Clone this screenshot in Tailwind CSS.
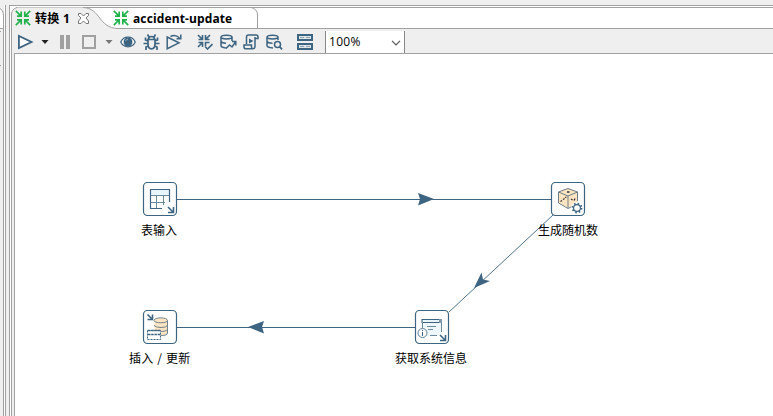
<!DOCTYPE html>
<html lang="zh-CN">
<head>
<meta charset="utf-8">
<title>转换 1</title>
<script src="https://cdn.jsdelivr.net/npm/@tailwindcss/browser@4"></script>
</head>
<body class="w-[773px] h-[416px] overflow-hidden bg-[#efefef] text-black font-['Open_Sans','Noto_Sans_CJK_SC',sans-serif] text-[12px]">
<div class="flex flex-col h-[416px]">
  <div class="h-[5px] shrink-0"></div>
  <div class="flex flex-1 min-h-0">
    <!-- edge of the explorer pane -->
    <aside class="w-[6px] shrink-0 border-r border-[#a0a0a0] flex">
      <svg class="w-[5px] h-[411px]" viewBox="0 5 5 411" fill="none">
        <path d="M4 5h1v411h-1z" fill="#fff"/>
        <path d="M0 9Q3 10 3.5 15V28H0z" fill="#fff"/>
        <path d="M0 8.5Q3.500 10 3.500 15V416M0 28.500H3M0 31.500H1M0 65.500H1" stroke="#a0a0a0"/>
      </svg>
    </aside>
    <div class="w-[3px] shrink-0"></div>
    <main class="flex-1 min-w-0 border-l border-t border-[#a0a0a0] bg-white pl-px pt-px">
      <div class="h-full border-l border-t border-[#a0a0a0] bg-[#efefef] flex flex-col">
        <!-- tabs -->
        <div class="relative h-[21px] shrink-0 bg-white">
          <svg class="absolute left-[-1px] top-[-1px] w-[762px] h-[22px]" viewBox="11 7 762 22" fill="none">
            <path d="M11 29V13Q12 8 17 7.500H83C100 7.500 98 28 118 28.500V29z" fill="#efefef"/>
            <path d="M10.500 7H16.500L11 13z" fill="#fff"/>
            <path d="M11.500 29V14Q12 9 17 7.500M83 7.500C101 8 98 28 118 28.500H773M251 7.500Q257.500 9 257.500 15V28" stroke="#a0a0a0"/>
          </svg>
          <div class="relative flex items-center h-[20px] font-bold text-[12px] leading-[20px] whitespace-nowrap">
            <svg class="ml-[3px] w-[16px] h-[16px] shrink-0" viewBox="0 0 16 16" fill="none" stroke="#20b24b" stroke-width="1.700"><path d="M.8.8L6 6M15.200.8L10 6M.8 15.200L6 10M15.200 15.200L10 10M2 6.200H6.200V1.500M14 6.200H9.800V1.500M2 9.800H6.200V14.500M14 9.800H9.800V14.500"/></svg>
            <span class="ml-[4px] w-[36px] mt-[2px] tracking-[0.300px]">转换 1</span>
            <svg class="ml-[7px] w-[11px] h-[11px] shrink-0" viewBox="0 0 11 11" fill="#fff" stroke="#747474"><path d="M.5.5H3L5.500 3L8 .5H10.500V2.500L8 5L10.500 8V10.500H8L5.500 8L3 10.500H.5V8L3 5L.5 2.500z"/></svg>
            <svg class="ml-[24px] w-[16px] h-[16px] shrink-0" viewBox="0 0 16 16" fill="none" stroke="#20b24b" stroke-width="1.700"><path d="M.8.8L6 6M15.200.8L10 6M.8 15.200L6 10M15.200 15.200L10 10M2 6.200H6.200V1.500M14 6.200H9.800V1.500M2 9.800H6.200V14.500M14 9.800H9.800V14.500"/></svg>
            <span class="ml-[4px] mt-[2px] tracking-[0.120px]">accident-update</span>
          </div>
        </div>
        <!-- toolbar -->
        <div class="h-[24px] shrink-0 flex items-center pt-px pl-[5px] text-[#3d6480]">
          <svg class="w-[17px] h-[16px]" viewBox="0 0 17 16" fill="#fff" stroke="currentColor" stroke-width="1.800"><path d="M1.900 2V14L14.500 8z"/></svg>
          <svg class="ml-[7px] w-[8px] h-[4px]" viewBox="0 0 8 4" fill="#222"><path d="M.5 0H7.500L4 4z"/></svg>
          <svg class="ml-[11px] w-[10px] h-[14px]" viewBox="0 0 10 14" fill="#a0a0a0"><path d="M0 0H4V14H0zM6 0H10V14H6z"/></svg>
          <svg class="ml-[12px] w-[14px] h-[14px]" viewBox="0 0 14 14" fill="none" stroke="#a0a0a0" stroke-width="2"><path d="M1 1H13V13H1z"/></svg>
          <svg class="ml-[9px] w-[8px] h-[4px]" viewBox="0 0 8 4" fill="#777"><path d="M.5 0H7.500L4 4z"/></svg>
          <svg class="ml-[7px] w-[16px] h-[14px]" viewBox="0 0 17 14"><path d="M.8 7C4 .2 13 .2 16.200 7C13 13.800 4 13.800.8 7z" fill="#fff" stroke="currentColor" stroke-width="1.300"/><circle cx="8.500" cy="7" r="4.700" fill="currentColor"/><path d="M6 6Q6.300 4.200 8.500 4" stroke="#9db4c3" fill="none"/></svg>
          <svg class="ml-[7px] w-[17px] h-[16px]" viewBox="0 0 17 16" fill="none" stroke="currentColor" stroke-width="1.700"><path d="M5 5.500H12V10Q12 14.800 8.500 14.800Q5 14.800 5 10zM5.500 5Q5.500 2.500 8.500 2.500Q11.500 2.500 11.500 5M6 3L4.500.5M11 3L12.500.5M5 7L2.500 6V3.500M12 7L14.500 6V3.500M5 9.500H.5M12 9.500H16.500M5.500 12L3 13V16M11.500 12L14 13V16"/></svg>
          <svg class="ml-[6px] w-[17px] h-[16px]" viewBox="0 0 17 16" fill="none" stroke="currentColor" stroke-width="1.500"><path d="M1.200 3V14.700L13 8.800z"/><path d="M4.500 2.500Q9-.2 13.500 3.800M14.800.5V4.800H10.500"/></svg>
          <svg class="ml-[14px] w-[16px] h-[16px]" viewBox="0 0 16 16" fill="none" stroke="currentColor" stroke-width="1.600"><path d="M1 1L5.500 5.500M13 1L8.500 5.500M1 13L5.500 8.500M1.500 5.500H5.500V1M12.500 5.500H8.500V1M1.500 8.500H5.500V13M8.500 12V8.500H12.500M8 12.500L10.500 15L15.500 10"/></svg>
          <svg class="ml-[7px] w-[17px] h-[16px]" viewBox="0 0 17 16" fill="none" stroke="currentColor" stroke-width="1.500"><path d="M6 14Q1 13.500 1 11.500V3C1 .5 12 .5 12 3C12 5.500 1 5.500 1 3M12 3V7M1 7.500Q2 9 6 9.200M6 14.500L9.500 11L12 13L15.500 8M12 7.500H15.800V11.500"/></svg>
          <svg class="ml-[6px] w-[16px] h-[16px]" viewBox="0 0 16 16" fill="none" stroke="currentColor" stroke-width="1.500"><path d="M3.500 10V3Q3.500 1 5.500 1H13Q15 1 15 3V4.500H12M12 3V12.500Q12 14.800 9.500 14.800H3Q1 14.800 1 13V11H8.500V13Q8.500 14.800 10 14.800"/><path d="M6 4.500V9.500L10.500 7z" fill="currentColor" stroke="none"/></svg>
          <svg class="ml-[7px] w-[17px] h-[16px]" viewBox="0 0 17 16" fill="none" stroke="currentColor" stroke-width="1.500"><path d="M7 14Q1 13.500 1 11.500V3C1 .5 12 .5 12 3C12 5.500 1 5.500 1 3M12 3V6M1 7.500Q2 9 6.500 9.200"/><circle cx="11.500" cy="10.500" r="3"/><path d="M13.500 12.500L16 15.300" stroke-width="1.800"/></svg>
          <svg class="ml-[14px] w-[16px] h-[16px]" viewBox="0 0 16 16"><path d="M0 0H16V7H0zM0 9H16V16H0z" fill="currentColor"/><path d="M2 2H14V5H2zM2 11H14V14H2z" fill="#dfe6ea"/><path d="M3 3.500H7M9 3.500H13M3 12.500H7M9 12.500H13" stroke="#8ea5b4"/></svg>
          <div class="ml-[12px] self-end h-[22px] w-[80px] border-x border-[#888] bg-white text-black flex items-center justify-between pl-[3px] pr-[3px] text-[12px]"><span class="tracking-[0.300px]">100%</span>
            <svg class="w-[10px] h-[6px] mt-[2px]" viewBox="0 0 10 6" fill="none" stroke="#555" stroke-width="1.200"><path d="M1 .8L5 4.800L9 .8"/></svg>
          </div>
        </div>
        <!-- transformation canvas; drawing coordinates start at (15,54) -->
        <div class="ml-[2px] flex-1 min-h-0 border-l border-t border-[#a0a0a0] bg-white relative font-['Noto_Sans_CJK_SC',sans-serif] text-[12px] leading-[18px]">
          <svg class="absolute left-0 top-0 w-[758px] h-[362px]" viewBox="15 54 758 362" fill="none">
            <g stroke="#3d6480"><path d="M177 199.500H551M415 327.500H177"/><path d="M553 215L449 312" stroke-width=".9"/></g>
            <g fill="#3d6480"><path d="M418 193L434 199L418 205.500L420 199z"/><path d="M264 321L248 327L264 333.500L262 327z"/><path d="M474 288L481.500 272.500L483 279.500L490 281z"/></g>
            <g fill="#fff" stroke="#3d6480" stroke-width="1.200">
              <rect x="143.500" y="182.500" width="33" height="33" rx="4"/>
              <rect x="551.500" y="182.500" width="33" height="33" rx="4"/>
              <rect x="143.500" y="310.500" width="33" height="33" rx="4"/>
              <rect x="415.500" y="310.500" width="33" height="33" rx="4"/>
            </g>
            <!-- table input -->
            <path d="M151 190H169V195H151z" fill="#e8f5fb"/>
            <path d="M162 208.500H150.500V189.500H169.500V202" stroke="#3d6480" stroke-width="1.200"/>
            <path d="M151 195.500H169M151 202.500H165M156.500 196V208M163.500 196V205" stroke="#6c8a9e"/>
            <path d="M168 207L173 212M173.500 207V212.500H168" stroke="#3d6480" stroke-width="1.600"/>
            <!-- random number -->
            <path d="M568 188L578 192V202L568 208L558.500 203V192z" fill="#fde5c3"/>
            <path d="M572 206.500L568 208.500L558.500 203V192L568 188.500L577.500 192V201M558.500 192L568 196L577.500 192M568 196V208" stroke="#6d7c84"/>
            <path d="M567 192h2.500M560.500 201.500l1.500-1M563 199.500l1.500-1M565 197.500l1.500-.5M571 199l1.500 1M574 200.500l1-2" stroke="#333" stroke-width="1.300"/>
            <circle cx="577" cy="208" r="6" fill="#fff"/>
            <circle cx="577" cy="208" r="3.400" stroke="#3d6480" stroke-width="1.200"/>
            <circle cx="577" cy="208" r="4.600" stroke="#3d6480" stroke-width="1.600" stroke-dasharray="1.600 2.013"/>
            <!-- insert / update -->
            <path d="M154.500 320.500V331H167V320.500C167 317 154.500 317 154.500 320.500z" fill="#fde5c3"/>
            <path d="M161 329V335.500Q167 335 167 333V325Q166 328 161 328z" fill="#fde5c3"/>
            <path d="M154 320.500C154 317 167.500 317 167.500 320.500C167.500 323.500 154 323.500 154 320.500M167.500 320.500V333Q167.500 335.500 161 335.500M154 325.500Q156 327.500 161 327.500Q166 327.500 167.500 325.500M161 331.500Q166 331.500 167.500 329.500" stroke="#73818a"/>
            <path d="M147.500 330.500H160.500V339.500H147.500z" fill="#fff" stroke="#3d6480" stroke-dasharray="2 1"/>
            <path d="M148 330.500H161M148 334.500H161" stroke="#3d6480" stroke-dasharray="2.500 .7" stroke-width="1.300"/>
            <path d="M147.500 314.500L152 319M152.500 314.500V319.500H147.500" stroke="#3d6480" stroke-width="1.600"/>
            <!-- system info -->
            <path d="M423 323H441V333L437 336H423z" fill="#eef8fc"/>
            <path d="M422 319.500H441V322.500H422z" fill="#e8f5fb" stroke="#3d6480" stroke-width="1.100"/>
            <path d="M439 319h3v4h-3z" fill="#8199aa"/>
            <path d="M422.500 322V328M441.500 323V332M427 326.500H436M428 329.500H433M430 335.500H437" stroke="#6c8a9e"/>
            <circle cx="422.500" cy="333" r="4.500" fill="#fff" stroke="#5b7c92"/>
            <path d="M422.500 330v1M422.500 332v4" stroke="#3d6480" stroke-width="1.100"/>
            <path d="M440 335L445 340M445.500 335V340.500H440" stroke="#3d6480" stroke-width="1.600"/>
          </svg>
          <span class="absolute left-[126px] top-[167px] whitespace-nowrap">表输入</span>
          <span class="absolute left-[523px] top-[167px] whitespace-nowrap">生成随机数</span>
          <span class="absolute left-[114px] top-[295px] whitespace-nowrap tracking-[0.200px] [word-spacing:1px]">插入 / 更新</span>
          <span class="absolute left-[380px] top-[295px] whitespace-nowrap">获取系统信息</span>
        </div>
      </div>
    </main>
  </div>
</div>
</body>
</html>
